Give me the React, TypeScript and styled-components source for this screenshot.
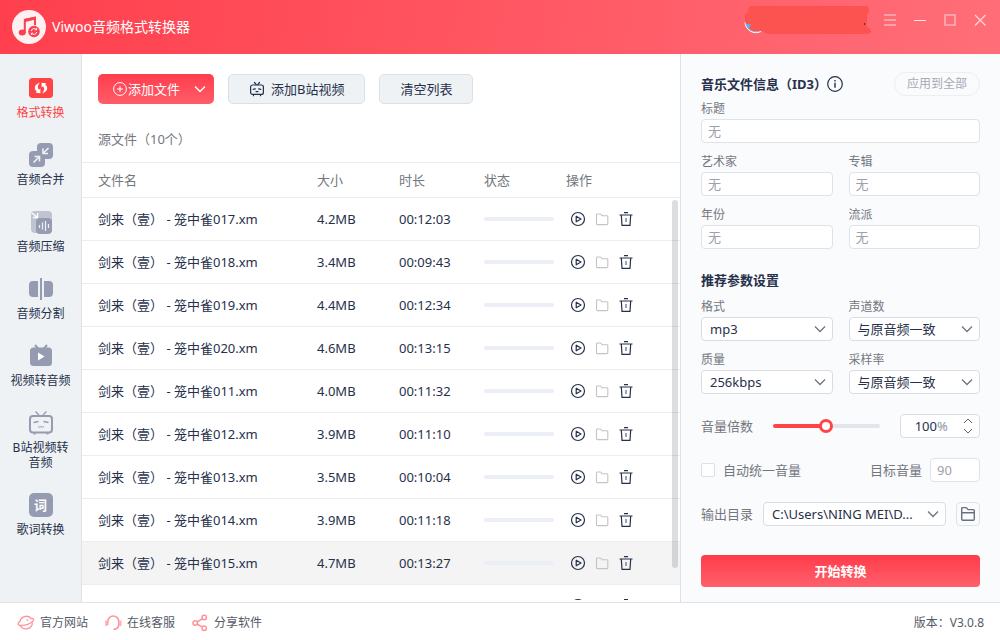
import React, { useState } from "react";
import styled, { createGlobalStyle, css } from "styled-components";

const ink = "#27304a";
const muted = "#74777e";
const slate = "#959cb1";
const red = "#ff4446";
const line = "#ebedf3";

const GlobalStyle = createGlobalStyle`
  *, *::before, *::after { box-sizing: border-box; }
  body {
    margin: 0;
    background: #fff;
    color: ${ink};
    font: 13px/20px "Noto Sans", "Noto Sans CJK SC", sans-serif;
  }
  button, input, select { font: inherit; color: inherit; margin: 0; }
  button { padding: 0; border: 0; background: none; cursor: pointer; }
  svg { display: block; flex: none; }
`;

const Window = styled.div`
  display: flex;
  flex-direction: column;
  height: 100vh;
`;

const TitleBar = styled.header`
  display: flex;
  flex: none;
  align-items: flex-start;
  height: 54px;
  padding: 0 5px 0 12px;
  color: #fff;
  background: linear-gradient(100deg, #ff3f4d, #ff6e78);
`;

const Brand = styled.h1`
  display: flex;
  flex: 1;
  align-items: center;
  gap: 6px;
  height: 54px;
  margin: 0;
  font-size: 14px;
  font-weight: 400;
`;

const WindowControls = styled.div`
  display: flex;
  padding-top: 5px;
`;

const ControlButton = styled.button`
  display: grid;
  place-items: center;
  width: 30px;
  height: 30px;
`;

const Account = styled.div`
  padding: 4px 4px 0 0;
`;

const Body = styled.div`
  display: flex;
  flex: 1;
  min-height: 0;
`;

const Sidebar = styled.nav`
  display: flex;
  flex: none;
  flex-direction: column;
  gap: 23px;
  width: 82px;
  padding: 22px 10px 0;
  border-right: 1px solid #dfe1e6;
  background: #eef2f5;
`;

const NavItem = styled.button<{ $active?: boolean }>`
  display: flex;
  flex-direction: column;
  align-items: center;
  gap: 5px;
  color: ${(p) => (p.$active ? red : ink)};
  font-size: 12px;
  line-height: 15px;
`;

const LyricBadge = styled.span`
  display: grid;
  place-items: center;
  width: 24px;
  height: 24px;
  border-radius: 5px;
  background: ${slate};
  color: #fff;
  font-size: 13px;
  font-weight: 700;
`;

const Main = styled.main`
  display: flex;
  flex: 1;
  flex-direction: column;
  min-width: 0;
  padding-bottom: 2px;
`;

const Toolbar = styled.div`
  display: flex;
  gap: 14px;
  padding: 20px 16px 0;
`;

const ToolButton = styled.button`
  display: flex;
  align-items: center;
  gap: 6px;
  height: 30px;
  padding: 0 20px;
  border: 1px solid #dcdfe3;
  border-radius: 5px;
  background: #eef2f5;
`;

const AddButton = styled.div`
  display: flex;
  height: 30px;
  border-radius: 5px;
  color: #fff;
  background: linear-gradient(#ff3d4c, #ff5d69);
`;

const AddMain = styled.button`
  display: flex;
  align-items: center;
  gap: 1px;
  padding: 0 5px 0 15px;
`;

const AddMore = styled.button`
  display: grid;
  place-items: center;
  width: 29px;
`;

const ListCaption = styled.h2`
  margin: 25px 16px 13px;
  color: ${muted};
  font-size: 13px;
  font-weight: 400;
`;

const ListArea = styled.div`
  position: relative;
  flex: 1;
  min-height: 0;
`;

const ListScroll = styled.div`
  height: 100%;
  overflow: hidden;
  border-top: 1px solid ${line};
`;

const ScrollThumb = styled.div`
  position: absolute;
  top: 38px;
  right: 2px;
  bottom: 32px;
  width: 6px;
  border-radius: 3px;
  background: rgba(40, 48, 60, 0.16);
`;

const FileTable = styled.table`
  width: 100%;
  border-collapse: separate;
  border-spacing: 0;
  table-layout: fixed;
`;

const HeadCell = styled.th<{ $width?: number }>`
  width: ${(p) => (p.$width ? `${p.$width}px` : "auto")};
  height: 35px;
  padding: 0;
  border-bottom: 1px solid ${line};
  color: ${muted};
  font-weight: 400;
  text-align: left;

  &:first-child { padding-left: 16px; }
`;

const FileRow = styled.tr<{ $selected?: boolean }>`
  background: ${(p) => (p.$selected ? "#f4f4f4" : "#fff")};
`;

const Cell = styled.td`
  height: 43px;
  padding: 0;
  border-bottom: 1px solid ${line};
  white-space: nowrap;

  &:first-child { padding-left: 16px; }
`;

const StatusTrack = styled.div`
  width: 70px;
  height: 4px;
  border-radius: 2px;
  background: #ebeef6;
`;

const RowActions = styled.div`
  display: flex;
  gap: 8px;
  padding-left: 4px;
`;

const Panel = styled.aside`
  flex: none;
  width: 320px;
  padding: 18px 20px 0;
  border-left: 1px solid #dfe1e6;
  background: #fafbfd;
`;

const PanelHeader = styled.div`
  display: flex;
  align-items: center;
  margin-bottom: 4px;
`;

const PanelTitle = styled.h2`
  margin: 0;
  font-size: 13px;
  font-weight: 700;
`;

const ParamsTitle = styled(PanelTitle)`
  margin: 21px 0 8px;
`;

const ApplyButton = styled.button`
  width: 86px;
  height: 24px;
  margin-left: auto;
  border: 1px solid #eceef1;
  border-radius: 12px;
  color: #a5a9b3;
  font-size: 12px;
`;

const FieldGrid = styled.div`
  display: grid;
  grid-template-columns: 1fr 1fr;
  gap: 10px 16px;
`;

const Field = styled.label<{ $wide?: boolean }>`
  display: flex;
  flex-direction: column;
  gap: 1px;
  min-width: 0;
  grid-column: ${(p) => (p.$wide ? "1 / -1" : "auto")};
  color: ${muted};
  font-size: 12px;
  line-height: 18px;
`;

const box = css`
  height: 24px;
  border: 1px solid #dfe2ea;
  border-radius: 4px;
  background: #fff;
`;

const TextInput = styled.input`
  ${box}
  width: 100%;
  padding: 0 6px;
  color: #9da1ab;
  font-size: 13px;
  outline: none;

  &::placeholder { color: #9da1ab; opacity: 1; }
`;

const TargetInput = styled(TextInput)`
  width: 50px;
`;

const SelectBox = styled.span`
  position: relative;
  display: block;
  flex: 1;
  min-width: 0;

  svg {
    position: absolute;
    top: 8px;
    right: 7px;
    pointer-events: none;
  }
`;

const NativeSelect = styled.select`
  ${box}
  display: block;
  width: 100%;
  padding: 0 26px 0 8px;
  border-color: #d9dce3;
  color: ${ink};
  font-size: 13px;
  appearance: none;
  outline: none;
`;

const SettingRow = styled.div<{ $gap: number }>`
  display: flex;
  align-items: center;
  gap: ${(p) => p.$gap}px;
  height: 24px;
  margin-top: 20px;
  color: ${muted};
`;

const Slider = styled.input`
  flex: 1;
  min-width: 0;
  height: 14px;
  background: none;
  appearance: none;

  &::-webkit-slider-runnable-track {
    height: 4px;
    border-radius: 2px;
    background: linear-gradient(90deg, ${red} 50%, #e3e5ed 50%);
  }
  &::-webkit-slider-thumb {
    width: 14px;
    height: 14px;
    margin-top: -5px;
    border: 3px solid ${red};
    border-radius: 50%;
    background: #fff;
    appearance: none;
  }
`;

const Spinner = styled.div`
  ${box}
  display: flex;
  align-items: center;
  width: 80px;
  border-color: #d9dce3;
`;

const SpinnerInput = styled.input`
  width: 36px;
  padding: 0;
  border: 0;
  background: none;
  color: ${ink};
  text-align: right;
  outline: none;
`;

const SpinnerUnit = styled.span`
  color: #8f929c;
`;

const SpinnerArrows = styled.div`
  display: flex;
  flex-direction: column;
  margin-left: auto;
  padding-right: 6px;
`;

const SpinnerArrow = styled.button`
  display: grid;
  place-items: center;
  width: 10px;
  height: 10px;
`;

const CheckLabel = styled.label`
  display: flex;
  flex: 1;
  align-items: center;
  gap: 8px;
`;

const Checkbox = styled.input`
  width: 14px;
  height: 14px;
  border: 1px solid #dcdfe6;
  border-radius: 2px;
  background: #fff;
  appearance: none;

  &:checked { background: ${red}; }
`;

const FolderButton = styled.button`
  ${box}
  display: grid;
  place-items: center;
  width: 24px;
  background: none;
`;

const StartButton = styled.button`
  width: 100%;
  height: 32px;
  margin-top: 29px;
  border-radius: 4px;
  color: #fff;
  font-weight: 700;
  background: linear-gradient(#ff3b4a, #ff606c);
`;

const Footer = styled.footer`
  display: flex;
  flex: none;
  align-items: center;
  gap: 16px;
  height: 38px;
  padding: 2px 16px 0 17px;
  border-top: 1px solid #dfe1e6;
  color: #565a68;
  font-size: 12px;
`;

const FooterLink = styled.a`
  display: flex;
  align-items: center;
  gap: 5px;
  color: inherit;
  text-decoration: none;
`;

const Version = styled.span`
  margin-left: auto;
`;

const Logo = () => (
  <svg width="34" height="34" viewBox="0 0 34 34">
    <circle cx="17" cy="17" r="17" fill="#fff1f1" />
    <path d="M12.8 23V10L23 7.6V16" fill="none" stroke="#f9414f" strokeWidth="2" strokeLinejoin="round" />
    <path d="M12 9 24 6.4v3.2l-12 2.6Z" fill="#f9414f" />
    <ellipse cx="10.2" cy="22.6" rx="3.5" ry="3" fill="#f9414f" />
    <circle cx="22" cy="21.5" r="6.4" fill="#fff1f1" />
    <circle cx="22" cy="21.5" r="5.8" fill="#f9414f" />
    <path d="M19.2 21a3 3 0 0 1 5-1.6M24.8 22a3 3 0 0 1-5 1.6M24.6 18v1.8h-1.8M19.4 25v-1.8h1.8" fill="none" stroke="#fff1f1" />
  </svg>
);

const AccountMark = () => (
  <svg width="128" height="32" viewBox="0 0 128 32">
    <path d="M2 18a11 11 0 0 0 16 9.500" fill="#8fa9c8" stroke="#fff" />
    <path d="M3 20h6l-4 4Z" fill="#4db4f5" />
    <path d="M7 2h117q2 1 2 4t-2 4v13q4 1 4 4t-4 3H25q-3 0-5-3H10q-2 0-4-3l2-4H4q-2 0-2-4v-4q0-3 3-4 0-4 2-6Z" fill="#fc5351" />
    <path d="M121.500 19v2" stroke="#5c2a2a" />
  </svg>
);

const TvIcon = () => (
  <svg width="16" height="16" viewBox="0 0 16 16" fill="none" stroke={ink} strokeWidth="1.2" strokeLinecap="round">
    <path d="M5.5 1.5 7.2 3.6M10.500 1.500 8.800 3.600" />
    <rect x="1.6" y="4" width="12.8" height="9.400" rx="2" />
    <path d="M4.200 8.300 6.400 7.800M11.800 8.300 9.600 7.800M7 10.600h2M4.500 14.300v.4M11.500 14.300v.4" />
  </svg>
);

const PlusCircle = () => (
  <svg width="14" height="14" viewBox="0 0 14 14" fill="none" stroke="#fff">
    <circle cx="7" cy="7" r="6.4" />
    <path d="M7 4v6M4 7h6" />
  </svg>
);

const Chevron = ({ color = "#6f7482" }: { color?: string }) => (
  <svg width="12" height="8" viewBox="0 0 12 8" fill="none" stroke={color} strokeWidth="1.3">
    <path d="m1 1.500 5 5 5-5" />
  </svg>
);

const SmallArrow = ({ up }: { up?: boolean }) => (
  <svg width="10" height="6" viewBox="0 0 10 6" fill="none" stroke="#5f6473">
    <path d={up ? "M1 5l4-4 4 4" : "M1 1l4 4 4-4"} />
  </svg>
);

const PlayIcon = () => (
  <svg width="16" height="16" viewBox="0 0 16 16" fill="none" stroke={ink} strokeWidth="1.2" strokeLinejoin="round">
    <circle cx="8" cy="8" r="6.5" />
    <path d="M6.2 5.200v5.600L11 8Z" />
  </svg>
);

const FolderIcon = () => (
  <svg width="16" height="16" viewBox="0 0 16 16" fill="none" stroke="#c2c4c9" strokeWidth="1.1" strokeLinejoin="round">
    <path d="M2.500 12.800v-9q0-.8.8-.8h3.200l1.500 1.700h5q.8 0 .8.8v7.300q0 .8-.8.8h-9.700q-.8 0-.8-.8Z" />
  </svg>
);

const TrashIcon = () => (
  <svg width="16" height="16" viewBox="0 0 16 16" fill="none" stroke={ink} strokeWidth="1.2">
    <path d="M1.500 4h13M6 1.600h4M3.300 4l.7 10.400h8L12.700 4" />
    <path d="M8 7v4" strokeWidth="1.5" stroke="#7c8394" />
  </svg>
);

const InfoIcon = () => (
  <svg width="16" height="16" viewBox="0 0 16 16" fill="none" stroke={ink} strokeWidth="1.2">
    <circle cx="8" cy="8" r="7.3" />
    <path d="M8 6.800v5M8 4v1.500" strokeWidth="1.4" />
  </svg>
);

const OpenFolder = () => (
  <svg width="16" height="16" viewBox="0 0 16 16" fill="none" stroke="#6a7080" strokeWidth="1.4" strokeLinejoin="round">
    <path d="M1.700 13V2.600q0-1 1-1h3.600l1.700 2h5.300q1 0 1 1V13q0 1.200-1 1.200H2.700q-1 0-1-1.200ZM1.700 6.700h12.600" />
  </svg>
);

const ConvertIcon = () => (
  <svg width="24" height="24" viewBox="0 0 24 24">
    <rect y="2" width="24" height="20" rx="3.5" fill={red} />
    <path d="M10.800 6.500C7.200 8 5.600 10 5.800 12c.1 1.500.9 2.700 2 3.600l-1.200 1.200 4.800.4V12.400l-1.400 1.300C8.200 12 8.400 9.600 10.800 6.500Z" fill="#fff" />
    <path d="M13.200 17.500c3.600-1.500 5.200-3.500 5-5.500-.1-1.500-.9-2.700-2-3.600l1.200-1.200-4.800-.4v4.800l1.400-1.300c1.800 1.700 1.600 4.100-.8 7.200Z" fill="#fff" />
  </svg>
);

const MergeIcon = () => (
  <svg width="24" height="24" viewBox="0 0 24 24">
    <rect x="8" width="16" height="16" rx="4" fill={slate} />
    <rect y="8" width="16" height="16" rx="4" fill={slate} />
    <path d="M19.500 5 14.500 10M14 5.500v5h5M4.500 19.500l5.500-5.500M5.500 13.500h5v5" fill="none" stroke="#eef2f5" strokeWidth="1.6" />
  </svg>
);

const CompressIcon = () => (
  <svg width="24" height="24" viewBox="0 0 24 24">
    <rect x="2" y="1" width="21" height="22" rx="4" fill="#bfc4d0" />
    <rect x="7" y="8" width="16" height="16" rx="4" fill={slate} />
    <path d="M3 3l5 4M8.500 3v4.500H4" fill="none" stroke="#fff" strokeWidth="1.3" />
    <path d="M10.500 15v3M13.500 12.500v7M16.500 11v10M19.500 14v4" stroke="#eef2f5" strokeWidth="1.2" />
  </svg>
);

const SplitIcon = () => (
  <svg width="24" height="24" viewBox="0 0 24 24" fill={slate}>
    <path d="M4 4h5v16H4q-4 0-4-4V8q0-4 4-4ZM15 4h5q4 0 4 4v8q0 4-4 4h-5Z" />
    <rect x="11" y="1" width="2" height="22" />
  </svg>
);

const VideoIcon = () => (
  <svg width="24" height="24" viewBox="0 0 24 24">
    <path d="M6 1l3 3.500M18 1l-3 3.500" stroke={slate} strokeWidth="2" />
    <rect x="1" y="3.5" width="22" height="18.5" rx="3.5" fill={slate} />
    <path d="M9 8.500v8l6.500-4Z" fill="#fff" />
  </svg>
);

const BiliIcon = () => (
  <svg width="24" height="24" viewBox="0 0 24 24" fill="none" stroke={slate} strokeWidth="2">
    <path d="M6.500.500 10 4M17.500.500 14 4" strokeWidth="1.3" />
    <rect x="1" y="5" width="22" height="16.5" rx="3" />
    <path d="M4.500 11.500 9.500 10.500M19.500 11.500l-5-1" strokeWidth="1.5" />
    <path d="M9 15.500q1.500 1.600 3 0 1.500 1.600 3 0" strokeWidth="1" />
    <path d="M5.500 22v1.500M18.500 22v1.500" />
  </svg>
);

const pink = "#ff929b";

const PlanetIcon = () => (
  <svg width="18" height="18" viewBox="0 0 18 18" fill="none" stroke={pink} strokeWidth="1.3">
    <path d="M2.800 8A6.500 6.500 0 0 1 14.500 5M15.400 8.500a6.500 6.500 0 0 1-12.200 3" />
    <path d="M2.800 7.600C.6 9 .4 10.800 3 11.300c5 .8 11-1.600 13.300-4.600 1-1.500 0-2.500-2-2.100" />
    <path d="M9.500 6h1.800" />
  </svg>
);

const HeadsetIcon = () => (
  <svg width="18" height="18" viewBox="0 0 18 18" fill="none" stroke={pink} strokeWidth="1.5">
    <path d="M3.800 11V7.500a5.500 5.500 0 0 1 11 0V10q0 5-5.300 5.500" />
    <path d="M2.300 6.500V12M16.300 6.500V12" strokeWidth="2.5" stroke="#ffb3b9" />
  </svg>
);

const ShareIcon = () => (
  <svg width="18" height="18" viewBox="0 0 18 18" fill="none" stroke={pink} strokeWidth="1.5">
    <circle cx="4.200" cy="9" r="2.2" />
    <circle cx="13.2" cy="3.5" r="2.2" />
    <circle cx="13.2" cy="14.2" r="2.2" />
    <path d="M6 8l5.300-3.200M6 10l5.300 3.100" />
  </svg>
);

const navItems = [
  { label: "格式转换", icon: <ConvertIcon /> },
  { label: "音频合并", icon: <MergeIcon /> },
  { label: "音频压缩", icon: <CompressIcon /> },
  { label: "音频分割", icon: <SplitIcon /> },
  { label: "视频转音频", icon: <VideoIcon /> },
  { label: "B站视频转音频", icon: <BiliIcon /> },
  { label: "歌词转换", icon: <LyricBadge>词</LyricBadge> },
];

const files = [
  { name: "剑来（壹） - 笼中雀017.xm", size: "4.2MB", time: "00:12:03" },
  { name: "剑来（壹） - 笼中雀018.xm", size: "3.4MB", time: "00:09:43" },
  { name: "剑来（壹） - 笼中雀019.xm", size: "4.4MB", time: "00:12:34" },
  { name: "剑来（壹） - 笼中雀020.xm", size: "4.6MB", time: "00:13:15" },
  { name: "剑来（壹） - 笼中雀011.xm", size: "4.0MB", time: "00:11:32" },
  { name: "剑来（壹） - 笼中雀012.xm", size: "3.9MB", time: "00:11:10" },
  { name: "剑来（壹） - 笼中雀013.xm", size: "3.5MB", time: "00:10:04" },
  { name: "剑来（壹） - 笼中雀014.xm", size: "3.9MB", time: "00:11:18" },
  { name: "剑来（壹） - 笼中雀015.xm", size: "4.7MB", time: "00:13:27" },
  { name: "", size: "", time: "" },
];

const windowButtons = [
  { label: "菜单", path: "M0 1h12M0 6h12M0 11h12", width: 1.6, tone: 0.5 },
  { label: "最小化", path: "M0 6.500h12", width: 1, tone: 0.85 },
  { label: "最大化", path: "M1 1h10v10H1Z", width: 1.5, tone: 0.5 },
  { label: "关闭", path: "M1 1l10.500 10.500M11.500 1 1 11.500", width: 1.1, tone: 0.75 },
];

function SelectField({ label, options }: { label: string; options: string[] }) {
  return (
    <Field>
      {label}
      <SelectBox>
        <NativeSelect>
          {options.map((o) => (
            <option key={o}>{o}</option>
          ))}
        </NativeSelect>
        <Chevron />
      </SelectBox>
    </Field>
  );
}

export default function App() {
  const [activeNav, setActiveNav] = useState(0);
  const [selected, setSelected] = useState(8);

  return (
    <Window>
      <GlobalStyle />
      <TitleBar>
        <Brand>
          <Logo />
          Viwoo音频格式转换器
        </Brand>
        <Account>
          <AccountMark />
        </Account>
        <WindowControls>
          {windowButtons.map((b) => (
            <ControlButton key={b.label} aria-label={b.label}>
              <svg width="12" height="12" viewBox="0 0 12 12" fill="none" stroke={`rgba(255,255,255,${b.tone})`} strokeWidth={b.width}>
                <path d={b.path} />
              </svg>
            </ControlButton>
          ))}
        </WindowControls>
      </TitleBar>

      <Body>
        <Sidebar>
          {navItems.map((item, i) => (
            <NavItem key={item.label} $active={i === activeNav} onClick={() => setActiveNav(i)}>
              {item.icon}
              <span>{item.label}</span>
            </NavItem>
          ))}
        </Sidebar>

        <Main>
          <Toolbar>
            <AddButton>
              <AddMain>
                <PlusCircle />
                添加文件
              </AddMain>
              <AddMore aria-label="更多添加方式">
                <Chevron color="#fff" />
              </AddMore>
            </AddButton>
            <ToolButton>
              <TvIcon />
              添加B站视频
            </ToolButton>
            <ToolButton>清空列表</ToolButton>
          </Toolbar>
          <ListCaption>源文件（10个）</ListCaption>
          <ListArea>
            <ListScroll>
              <FileTable>
                <thead>
                  <tr>
                    <HeadCell>文件名</HeadCell>
                    <HeadCell $width={82}>大小</HeadCell>
                    <HeadCell $width={85}>时长</HeadCell>
                    <HeadCell $width={82}>状态</HeadCell>
                    <HeadCell $width={114}>操作</HeadCell>
                  </tr>
                </thead>
                <tbody>
                  {files.map((file, i) => (
                    <FileRow key={i} $selected={i === selected} onClick={() => setSelected(i)}>
                      <Cell>{file.name}</Cell>
                      <Cell>{file.size}</Cell>
                      <Cell>{file.time}</Cell>
                      <Cell>
                        <StatusTrack />
                      </Cell>
                      <Cell>
                        <RowActions>
                          <button aria-label="播放"><PlayIcon /></button>
                          <button aria-label="打开文件夹"><FolderIcon /></button>
                          <button aria-label="删除"><TrashIcon /></button>
                        </RowActions>
                      </Cell>
                    </FileRow>
                  ))}
                </tbody>
              </FileTable>
            </ListScroll>
            <ScrollThumb />
          </ListArea>
        </Main>

        <Panel>
          <PanelHeader>
            <PanelTitle>音乐文件信息（ID3）</PanelTitle>
            <InfoIcon />
            <ApplyButton>应用到全部</ApplyButton>
          </PanelHeader>
          <FieldGrid>
            <Field $wide>
              标题
              <TextInput placeholder="无" />
            </Field>
            {["艺术家", "专辑", "年份", "流派"].map((label) => (
              <Field key={label}>
                {label}
                <TextInput placeholder="无" />
              </Field>
            ))}
          </FieldGrid>

          <ParamsTitle>推荐参数设置</ParamsTitle>
          <FieldGrid>
            <SelectField label="格式" options={["mp3", "wav", "flac"]} />
            <SelectField label="声道数" options={["与原音频一致"]} />
            <SelectField label="质量" options={["256kbps", "128kbps"]} />
            <SelectField label="采样率" options={["与原音频一致"]} />
          </FieldGrid>

          <SettingRow $gap={20}>
            <label htmlFor="volume">音量倍数</label>
            <Slider id="volume" type="range" min={0} max={100} defaultValue={49} />
            <Spinner>
              <SpinnerInput aria-label="音量百分比" defaultValue="100" />
              <SpinnerUnit>%</SpinnerUnit>
              <SpinnerArrows>
                <SpinnerArrow aria-label="增加"><SmallArrow up /></SpinnerArrow>
                <SpinnerArrow aria-label="减少"><SmallArrow /></SpinnerArrow>
              </SpinnerArrows>
            </Spinner>
          </SettingRow>

          <SettingRow $gap={8}>
            <CheckLabel>
              <Checkbox type="checkbox" />
              自动统一音量
            </CheckLabel>
            <label htmlFor="target">目标音量</label>
            <TargetInput id="target" defaultValue="90" />
          </SettingRow>

          <SettingRow $gap={10}>
            <label htmlFor="output">输出目录</label>
            <SelectBox>
              <NativeSelect id="output">
                <option>C:\Users\NING MEI\D...</option>
              </NativeSelect>
              <Chevron />
            </SelectBox>
            <FolderButton aria-label="选择输出目录">
              <OpenFolder />
            </FolderButton>
          </SettingRow>

          <StartButton>开始转换</StartButton>
        </Panel>
      </Body>

      <Footer>
        <FooterLink href="#site"><PlanetIcon />官方网站</FooterLink>
        <FooterLink href="#support"><HeadsetIcon />在线客服</FooterLink>
        <FooterLink href="#share"><ShareIcon />分享软件</FooterLink>
        <Version>版本：V3.0.8</Version>
      </Footer>
    </Window>
  );
}
